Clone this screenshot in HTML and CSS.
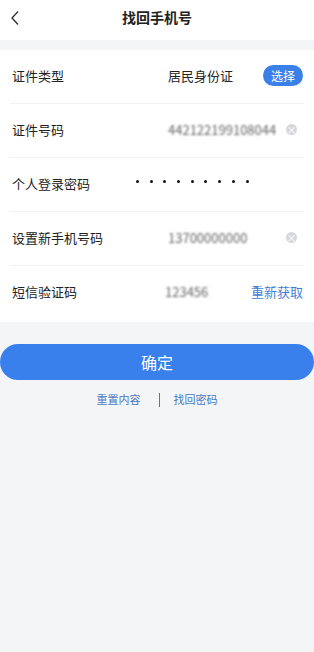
FILE: index.html
```html
<!DOCTYPE html>
<html lang="zh">
<head>
  <meta charset="UTF-8" />
  <meta name="viewport" content="width=device-width, initial-scale=1.0"/>
  <title>找回手机号</title>
  <link rel="stylesheet" href="styles.css">
</head>
<body>
  <div class="header">
    <span class="back">
      <svg width="10" height="16" viewBox="0 0 10 16"><path d="M8 1.5 L2 8 L8 14.5" fill="none" stroke="#333" stroke-width="1.4"/></svg>
    </span>
    <h1>找回手机号</h1>
  </div>

  <div class="card">
    <div class="row">
      <span class="label">证件类型</span>
      <span class="value dark">居民身份证</span>
      <span class="pick">选择</span>
    </div>
    <div class="row">
      <span class="label">证件号码</span>
      <span class="value blur">442122199108044</span>
      <span class="clear">×</span>
    </div>
    <div class="row">
      <span class="label">个人登录密码</span>
      <span class="dots"><i></i><i></i><i></i><i></i><i></i><i></i><i></i><i></i><i></i></span>
    </div>
    <div class="row">
      <span class="label">设置新手机号码</span>
      <span class="value blur">13700000000</span>
      <span class="clear">×</span>
    </div>
    <div class="row last">
      <span class="label">短信验证码</span>
      <span class="value blur code">123456</span>
      <span class="resend">重新获取</span>
    </div>
  </div>

  <button class="submit">确定</button>

  <div class="links">
    <a>重置内容</a>
    <span class="bar"></span>
    <a>找回密码</a>
  </div>
</body>
</html>
```

FILE: styles.css
```css
body {
  margin: 0;
  background: #f4f5f7;
  font-family: "Noto Sans CJK SC", "Noto Sans", sans-serif;
  color: #222;
}

.header {
  height: 40px;
  background: #fff;
  display: flex;
  align-items: center;
  justify-content: center;
  position: relative;
}

.back {
  position: absolute;
  left: 10px;
  top: 7px;
}

h1 {
  margin: 0 0 6px;
  font-size: 14px;
  font-weight: 700;
  color: #222;
}

.card {
  margin-top: 10px;
  background: #fff;
  padding: 0 10px 3px;
}

.row {
  height: 50px;
  padding-bottom: 3px;
  display: flex;
  align-items: center;
  border-bottom: 1px solid #f0f1f3;
  font-size: 13px;
}

.row.last {
  border-bottom: none;
}

.label {
  width: 156px;
  padding-left: 2px;
  flex-shrink: 0;
}

.value {
  flex: 1;
}

.dark {
  color: #222;
}

.blur {
  color: #666;
  font-size: 13px;
  filter: blur(1.1px);
}

.code {
  margin-left: -3px;
}

.pick {
  background: #3a80e8;
  color: #fff;
  font-size: 12px;
  border-radius: 13px;
  padding: 2px 8px;
  margin-right: 1px;
}

.clear {
  width: 11px;
  height: 11px;
  border-radius: 50%;
  background: #d6d7d9;
  color: #fff;
  font-size: 10px;
  line-height: 11px;
  text-align: center;
  margin-right: 7px;
}

.dots {
  display: flex;
  gap: 10.7px;
  margin-left: -32px;
  margin-top: -4px;
}

.dots i {
  width: 3px;
  height: 3px;
  border-radius: 50%;
  background: #111;
}

.resend {
  color: #3f7ed8;
  font-size: 13px;
  margin-right: 1px;
}

.submit {
  display: block;
  width: 314px;
  height: 36px;
  margin-top: 22px;
  border: none;
  border-radius: 18px;
  background: #3a80ec;
  color: #fff;
  font-family: "Noto Sans CJK SC", sans-serif;
  font-size: 16px;
}

.links {
  display: flex;
  justify-content: center;
  align-items: center;
  margin-top: 11px;
  font-size: 11px;
  color: #4a79c2;
}

.bar {
  width: 1px;
  height: 14px;
  background: #4a79c2;
  margin: 2px 14px 0 18px;
}
```
